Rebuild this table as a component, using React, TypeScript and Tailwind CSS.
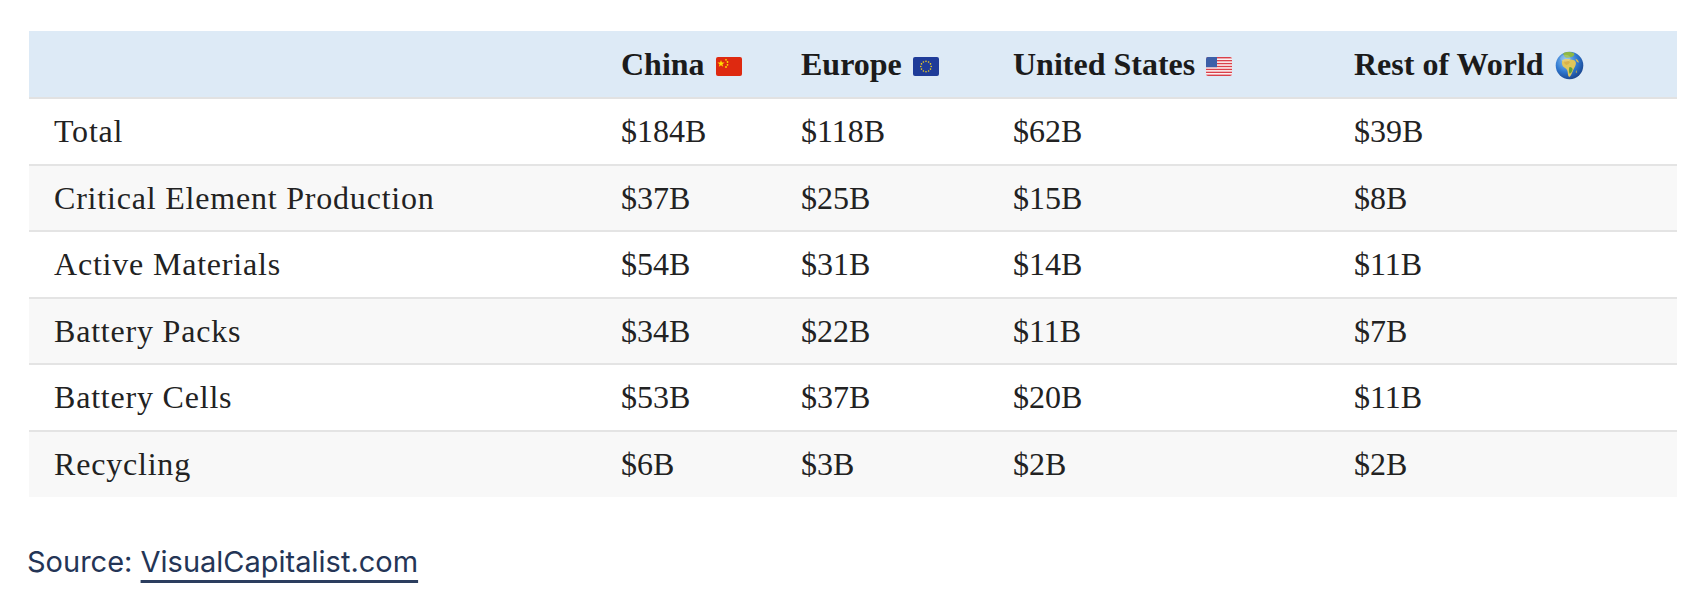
import React from "react";

type Row = { label: string; values: string[] };

const rows: Row[] = [
  { label: "Total", values: ["$184B", "$118B", "$62B", "$39B"] },
  { label: "Critical Element Production", values: ["$37B", "$25B", "$15B", "$8B"] },
  { label: "Active Materials", values: ["$54B", "$31B", "$14B", "$11B"] },
  { label: "Battery Packs", values: ["$34B", "$22B", "$11B", "$7B"] },
  { label: "Battery Cells", values: ["$53B", "$37B", "$20B", "$11B"] },
  { label: "Recycling", values: ["$6B", "$3B", "$2B", "$2B"] },
];

// Flags drawn by hand, there is no emoji font in the sandbox
function ChinaFlag() {
  return (
    <svg width="26" height="19" viewBox="0 0 26 19" className="inline-block align-[-1px]">
      <rect x="0" y="0" width="26" height="19" rx="2" fill="#de2910" />
      <polygon points="5,3 5.9,5.6 8.6,5.6 6.4,7.2 7.2,9.8 5,8.2 2.8,9.8 3.6,7.2 1.4,5.6 4.1,5.6" fill="#ffde00" />
      <circle cx="10" cy="2.8" r="0.9" fill="#ffde00" />
      <circle cx="11.5" cy="5" r="0.9" fill="#ffde00" />
      <circle cx="11.5" cy="7.8" r="0.9" fill="#ffde00" />
      <circle cx="10" cy="10" r="0.9" fill="#ffde00" />
    </svg>
  );
}

function EuFlag() {
  const stars = Array.from({ length: 12 }, (_, i) => {
    const a = (i / 12) * Math.PI * 2;
    return { x: 13 + Math.cos(a) * 5.2, y: 9.5 + Math.sin(a) * 5.2 };
  });
  return (
    <svg width="26" height="19" viewBox="0 0 26 19" className="inline-block align-[-1px]">
      <rect x="0" y="0" width="26" height="19" rx="2" fill="#1f3c99" />
      {stars.map((s, i) => (
        <circle key={i} cx={s.x} cy={s.y} r="0.8" fill="#f4d21b" />
      ))}
    </svg>
  );
}

function UsFlag() {
  return (
    <svg width="26" height="19" viewBox="0 0 26 19" className="inline-block align-[-1px]">
      <defs>
        <clipPath id="usclip">
          <rect x="0" y="0" width="26" height="19" rx="2" />
        </clipPath>
      </defs>
      <g clipPath="url(#usclip)">
        <rect x="0" y="0" width="26" height="19" fill="#ffffff" />
        {[0, 2, 4, 6, 8, 10, 12].map((i) => (
          <rect key={i} x="0" y={(i * 19) / 13} width="26" height={19 / 13} fill="#d9404a" />
        ))}
        <rect x="0" y="0" width="11" height="10.2" fill="#3c5fa8" />
      </g>
    </svg>
  );
}

function Globe() {
  return (
    <svg width="29" height="29" viewBox="0 0 28 28" className="inline-block align-[-5px]">
      <defs>
        <radialGradient id="sea" cx="38%" cy="32%" r="75%">
          <stop offset="0%" stopColor="#8cc6f5" />
          <stop offset="55%" stopColor="#2f78d0" />
          <stop offset="100%" stopColor="#173f86" />
        </radialGradient>
        <clipPath id="ball">
          <circle cx="14" cy="14" r="13.3" />
        </clipPath>
      </defs>
      <circle cx="14" cy="14" r="13.3" fill="url(#sea)" />
      <g clipPath="url(#ball)">
        {/* Europe */}
        <path
          d="M8 1 C11 0.5 15 0.5 18 2 C19.5 3.5 18 5 16.5 5.5 C15 6 13.5 6.5 12 6.5 C10.5 6.5 9 5.5 8.5 4 C8 3 7.5 2 8 1 Z"
          fill="#8fb845"
        />
        {/* Africa */}
        <path
          d="M7 9 C9 7.5 12 7.3 14 8 C15.5 8.6 17 8.4 18.5 9 C20 10 20.5 11.5 20 13 C19.5 15 18.5 16.5 17.5 18.5 C16.8 20.5 16 22.5 14.5 24.5 C13.5 25.3 12.8 24.6 12.6 23 C12.3 21 12.4 19.5 11.5 18 C10.5 16.8 9 16.2 7.8 15 C6.8 13.8 6.3 11.5 7 9 Z"
          fill="#e0c65a"
        />
        <path
          d="M9 9.5 C11 9 13 9.5 14.5 10.5 C14 12 12.5 13 11 13.5 C9.5 13 8.5 11.5 9 9.5 Z"
          fill="#d8b24a"
        />
        <path
          d="M14 15.5 C15.8 15.5 17 16.5 17 18 C16.3 20 15.3 21.5 14 22 C13.3 20.5 13.3 17.5 14 15.5 Z"
          fill="#5fa33a"
        />
        {/* Arabia */}
        <path d="M20 7.5 C21.5 8 23 9.5 23 11 C22 11.5 21 10.5 20.5 9.5 C20 9 19.8 8.2 20 7.5 Z" fill="#d6bb55" />
        {/* Madagascar */}
        <path d="M20.5 18.5 C21.2 19 21.2 20.5 20.5 21.5 C20 20.8 20 19.5 20.5 18.5 Z" fill="#cdb84a" />
      </g>
      <ellipse cx="10" cy="7" rx="5" ry="3.5" fill="#ffffff" opacity="0.18" />
    </svg>
  );
}

const headers: { label: string; icon: React.ReactNode; width: string }[] = [
  { label: "China", icon: <ChinaFlag />, width: "w-[180px]" },
  { label: "Europe", icon: <EuFlag />, width: "w-[212px]" },
  { label: "United States", icon: <UsFlag />, width: "w-[341px]" },
  { label: "Rest of World", icon: <Globe />, width: "w-[348px]" },
];

export default function App() {
  return (
    <div className="min-h-screen bg-white pl-[29px] pt-[31px]">
      <table className="w-[1648px] table-fixed border-collapse font-['Liberation_Serif',serif] text-[32px] text-[#222]">
        <thead>
          <tr className="h-[67px] border-b-2 border-[#e2e2e2] bg-[#ddeaf6] text-[#1b1b1b]">
            <th className="w-[567px] pl-[25px] text-left font-bold"></th>
            {headers.map((h) => (
              <th key={h.label} className={`${h.width} pl-[25px] text-left font-bold`}>
                <span className="whitespace-nowrap">
                  {h.label}
                  <span className="ml-[11px]">{h.icon}</span>
                </span>
              </th>
            ))}
          </tr>
        </thead>
        <tbody>
          {rows.map((r, i) => (
            <tr
              key={r.label}
              className={`h-[66.5px] ${i % 2 === 1 ? "bg-[#f8f8f8]" : "bg-white"} ${
                i < rows.length - 1 ? "border-b-2 border-[#e4e4e4]" : ""
              }`}
            >
              <td className="pl-[25px] tracking-[0.8px]">{r.label}</td>
              {r.values.map((v, j) => (
                <td key={j} className="pl-[25px]">
                  {v}
                </td>
              ))}
            </tr>
          ))}
        </tbody>
      </table>

      <p className="mt-[43px] -ml-[2px] font-['Inter',sans-serif] text-[29px] text-[#243556]">
        Source:{" "}
        <a href="#" className="underline decoration-[#2c3e5f] decoration-[3px] underline-offset-[8px]">
          VisualCapitalist.com
        </a>
      </p>
    </div>
  );
}
